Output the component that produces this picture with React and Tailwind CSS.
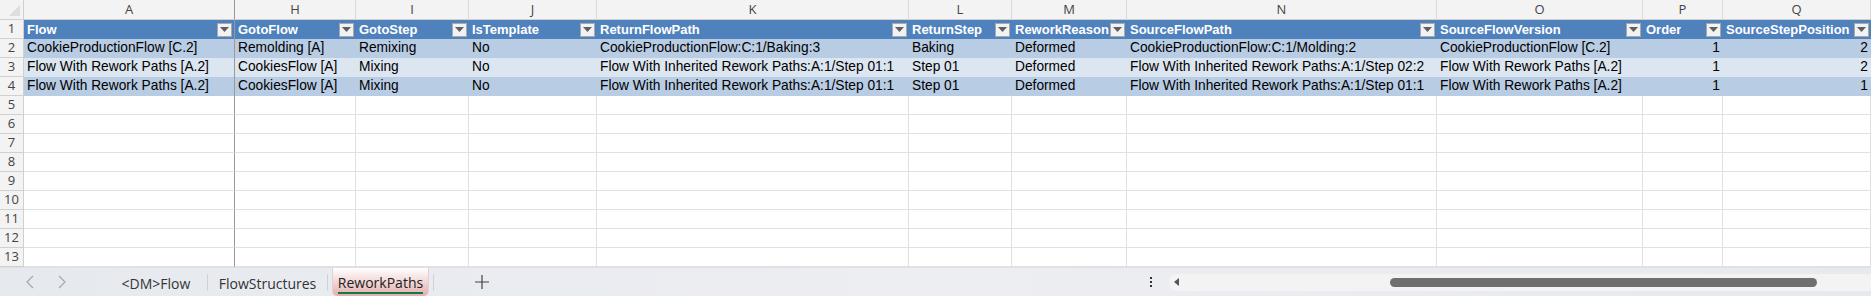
import React from 'react';

const columns = [
    { letter: 'A', name: 'Flow', w: 'w-[211px]', frozen: true },
    { letter: 'H', name: 'GotoFlow', w: 'w-[121px]' },
    { letter: 'I', name: 'GotoStep', w: 'w-[113px]' },
    { letter: 'J', name: 'IsTemplate', w: 'w-[128px]' },
    { letter: 'K', name: 'ReturnFlowPath', w: 'w-[312px]' },
    { letter: 'L', name: 'ReturnStep', w: 'w-[103px]' },
    { letter: 'M', name: 'ReworkReason', w: 'w-[115px]' },
    { letter: 'N', name: 'SourceFlowPath', w: 'w-[310px]' },
    { letter: 'O', name: 'SourceFlowVersion', w: 'w-[206px]' },
    { letter: 'P', name: 'Order', w: 'w-[80px]', num: true },
    { letter: 'Q', name: 'SourceStepPosition', w: 'w-[148px]', num: true },
];

const rows = [
    ['CookieProductionFlow [C.2]', 'Remolding [A]', 'Remixing', 'No', 'CookieProductionFlow:C:1/Baking:3', 'Baking', 'Deformed', 'CookieProductionFlow:C:1/Molding:2', 'CookieProductionFlow [C.2]', '1', '2'],
    ['Flow With Rework Paths [A.2]', 'CookiesFlow [A]', 'Mixing', 'No', 'Flow With Inherited Rework Paths:A:1/Step 01:1', 'Step 01', 'Deformed', 'Flow With Inherited Rework Paths:A:1/Step 02:2', 'Flow With Rework Paths [A.2]', '1', '2'],
    ['Flow With Rework Paths [A.2]', 'CookiesFlow [A]', 'Mixing', 'No', 'Flow With Inherited Rework Paths:A:1/Step 01:1', 'Step 01', 'Deformed', 'Flow With Inherited Rework Paths:A:1/Step 01:1', 'Flow With Rework Paths [A.2]', '1', '1'],
];

const bands = ['bg-[#b8cce4]', 'bg-[#dce6f1]', 'bg-[#b8cce4]'];

function FilterButton() {
    return (
        <div className="w-[15px] h-[14px] shrink-0 mr-[2px] bg-[#f2f2f2] border border-[#a9a9a9] flex items-center justify-center">
            <svg width="9" height="5" viewBox="0 0 9 5">
                <path d="M0 0 L9 0 L4.5 5 Z" fill="#5f5f5f" />
            </svg>
        </div>
    );
}

function RowHeader({ n }) {
    return (
        <div className="w-[24px] shrink-0 h-full bg-[#f3f3f3] border-r border-b border-[#d0d0d0] text-[#444] flex items-center justify-center font-['Open_Sans',sans-serif] text-[13px]">
            {n}
        </div>
    );
}

function edge(col) {
    return col.frozen ? 'border-r border-r-[#999]' : '';
}

export default function App() {
    const emptyRows = [5, 6, 7, 8, 9, 10, 11, 12, 13];

    return (
        <div className="w-[1871px] h-[296px] overflow-hidden bg-white flex flex-col font-['Liberation_Sans',Arial,sans-serif] text-[13.75px] text-black">
            {/* column letters */}
            <div className="flex h-[20px] shrink-0">
                <div className="w-[24px] shrink-0 bg-[#f3f3f3] border-r border-b border-[#d0d0d0] relative">
                    <svg className="absolute right-[3px] bottom-[3px]" width="11" height="11" viewBox="0 0 11 11">
                        <path d="M11 0 L11 11 L0 11 Z" fill="#dedede" />
                    </svg>
                </div>
                {columns.map((col) => (
                    <div
                        key={col.letter}
                        className={`${col.w} shrink-0 bg-[#f3f3f3] border-b border-[#d0d0d0] flex items-center justify-center text-[#444] font-['Open_Sans',sans-serif] text-[13px] ${col.frozen ? 'border-r border-r-[#999]' : 'border-r border-r-[#dadada]'}`}
                    >
                        {col.letter}
                    </div>
                ))}
            </div>

            {/* table header */}
            <div className="flex h-[19px] shrink-0">
                <RowHeader n={1} />
                {columns.map((col) => (
                    <div
                        key={col.letter}
                        className={`${col.w} shrink-0 bg-[#4f81bd] text-white font-bold text-[13px] flex items-center justify-between pl-[3px] ${edge(col)}`}
                    >
                        <span className="whitespace-nowrap overflow-hidden">{col.name}</span>
                        <FilterButton />
                    </div>
                ))}
            </div>

            {/* table body */}
            {rows.map((row, i) => (
                <div key={i} className="flex h-[19px] shrink-0">
                    <RowHeader n={i + 2} />
                    {row.map((cell, j) => (
                        <div
                            key={j}
                            className={`${columns[j].w} shrink-0 ${bands[i]} flex items-center whitespace-nowrap overflow-hidden ${columns[j].num ? 'justify-end pr-[3px]' : 'pl-[3px]'} ${edge(columns[j])}`}
                        >
                            {cell}
                        </div>
                    ))}
                </div>
            ))}

            {/* empty rows */}
            {emptyRows.map((n) => (
                <div key={n} className="flex h-[19px] shrink-0">
                    <RowHeader n={n} />
                    {columns.map((col) => (
                        <div
                            key={col.letter}
                            className={`${col.w} shrink-0 border-b border-[#e1e1e1] ${col.frozen ? 'border-r border-r-[#999]' : 'border-r border-r-[#e1e1e1]'}`}
                        />
                    ))}
                </div>
            ))}

            {/* sheet tabs */}
            <div className="flex-1 flex items-center bg-gradient-to-r from-[#e6e9ee] via-[#eceef2] to-[#e6e9ee] font-['Open_Sans',sans-serif] text-[14px] text-[#333] border-t border-[#e0e0e0]">
                <div className="w-[105px] shrink-0 flex items-center pl-[26px] gap-[24px]">
                    <svg width="8" height="14" viewBox="0 0 8 14"><path d="M7 1 L1 7 L7 13" stroke="#a8a8a8" strokeWidth="1.2" fill="none" /></svg>
                    <svg width="8" height="14" viewBox="0 0 8 14"><path d="M1 1 L7 7 L1 13" stroke="#a8a8a8" strokeWidth="1.2" fill="none" /></svg>
                </div>
                <div className="w-[102px] shrink-0 text-center pt-[2px]">&lt;DM&gt;Flow</div>
                <div className="w-px h-[17px] bg-[#cfd2d6]" />
                <div className="w-[119px] shrink-0 text-center pt-[2px]">FlowStructures</div>
                <div className="w-px h-[17px] bg-[#cfd2d6]" />
                <div className="w-[97px] h-full shrink-0 ml-[4px] rounded-b-[5px] bg-gradient-to-b from-white to-[#e3aeae] border-x border-[#e8cfcf] flex flex-col items-center justify-center pt-[2px]">
                    <span className="text-[#222] border-b-2 border-[#107c41] leading-[19px]">ReworkPaths</span>
                </div>
                <div className="w-px h-[17px] ml-[4px] bg-[#cfd2d6]" />
                <div className="w-[95px] shrink-0 flex justify-center">
                    <svg width="14" height="14" viewBox="0 0 14 14"><path d="M7 0 V14 M0 7 H14" stroke="#444" strokeWidth="1.2" /></svg>
                </div>
                <div className="flex-1" />
                <div className="w-[14px] flex flex-col items-center gap-[2px]">
                    <div className="w-[2px] h-[2px] bg-[#333]" />
                    <div className="w-[2px] h-[2px] bg-[#333]" />
                    <div className="w-[2px] h-[2px] bg-[#333]" />
                </div>
                <div className="w-[702px] h-[17px] ml-[11px] bg-[#f3f3f3] rounded-l-[8px] flex items-center">
                    <svg className="ml-[5px]" width="5" height="8" viewBox="0 0 5 8"><path d="M5 0 V8 L0 4 Z" fill="#555" /></svg>
                    <div className="ml-[211px] w-[427px] h-[9px] rounded-full bg-[#6f6f6f]" />
                </div>
            </div>
        </div>
    );
}
